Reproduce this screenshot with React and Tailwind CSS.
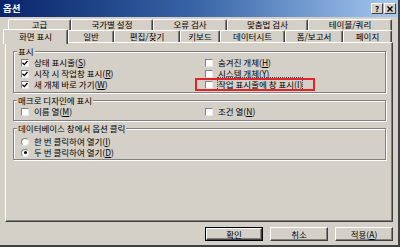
import React from "react";

const tabsBack = [
  { label: "고급", w: "w-[63px]" },
  { label: "국가별 설정", w: "w-[82px]" },
  { label: "오류 검사", w: "w-[74px]" },
  { label: "맞춤법 검사", w: "w-[81px]" },
  { label: "테이블/쿼리", w: "w-[84px]" },
];

const tabsFront = [
  { label: "일반", w: "w-[46px]" },
  { label: "편집/찾기", w: "w-[66px]" },
  { label: "키보드", w: "w-[40px]" },
  { label: "데이터시트", w: "w-[65px]" },
  { label: "폼/보고서", w: "w-[58px]" },
  { label: "페이지", w: "w-[49px]" },
];

const tabCls =
  "flex justify-center bg-[#d4d0c8] border-t border-l border-r border-t-white border-l-white border-r-[#404040] rounded-t-[2px] shadow-[inset_-1px_0_0_#808080]";

const Check = ({ checked }) => (
  <span className="w-[8px] h-[8px] shrink-0 bg-white border border-t-[#808080] border-l-[#808080] border-r-[#e8e8e8] border-b-[#e8e8e8] flex items-center justify-center">
    {checked && (
      <svg width="6" height="6" viewBox="0 0 6 6">
        <path d="M0.5 2.8 L2.3 4.6 L5.5 1" fill="none" stroke="#000" strokeWidth="1.3" />
      </svg>
    )}
  </span>
);

const Radio = ({ checked }) => (
  <span className="w-[8px] h-[8px] shrink-0 rounded-full bg-white border border-t-[#808080] border-l-[#808080] border-r-[#e8e8e8] border-b-[#e8e8e8] flex items-center justify-center">
    {checked && <span className="w-[3px] h-[3px] rounded-full bg-black" />}
  </span>
);

const Opt = ({ radio, checked, children, className = "" }) => (
  <div className={"flex items-center h-[11px] gap-[5px] " + className}>
    {radio ? <Radio checked={checked} /> : <Check checked={checked} />}
    <span className="leading-[11px] whitespace-nowrap">{children}</span>
  </div>
);

const Group = ({ title, className = "", children }) => (
  <fieldset
    className={
      "w-[373px] border border-[#808080] shadow-[inset_1px_1px_0_#fff,1px_1px_0_#fff] " +
      className
    }
  >
    <legend className="ml-[3px] px-[1px] leading-[11px] bg-[#d4d0c8] relative">{title}</legend>
    {children}
  </fieldset>
);

const Btn = ({ children, def }) => (
  <div className={"w-[58px] h-[14px] " + (def ? "border border-black" : "")}>
    <div className="w-full h-full flex items-center justify-center bg-[#d4d0c8] border-t border-l border-r border-b border-t-white border-l-white border-r-[#404040] border-b-[#404040] shadow-[inset_-1px_-1px_0_#808080] leading-none">
      {children}
    </div>
  </div>
);

export default function App() {
  return (
    <div className="w-[400px] h-[247px] overflow-hidden bg-[#d4d0c8] border-r-2 border-b-2 border-r-[#404040] border-b-[#404040] font-['Noto_Sans_CJK_KR',sans-serif] text-[8.5px] text-black flex flex-col">
      {/* title bar */}
      <div className="h-[17px] shrink-0 flex items-center justify-between bg-gradient-to-r from-[#0a246a] via-[#3a66a8] to-[#a6caf0] pl-[3px] pr-[2px]">
        <span className="text-white font-bold text-[9.5px] leading-none">옵션</span>
        <div className="flex gap-[1px]">
          <div className="w-[12px] h-[11px] bg-[#d4d0c8] border border-t-white border-l-white border-r-[#404040] border-b-[#404040] flex items-center justify-center font-bold text-[8px] leading-none">
            ?
          </div>
          <div className="w-[12px] h-[11px] bg-[#d4d0c8] border border-t-white border-l-white border-r-[#404040] border-b-[#404040] flex items-center justify-center">
            <svg width="6" height="6" viewBox="0 0 6 6">
              <path d="M0.5 0.5 L5.5 5.5 M5.5 0.5 L0.5 5.5" stroke="#000" strokeWidth="1.4" />
            </svg>
          </div>
        </div>
      </div>

      {/* tab rows */}
      <div className="mt-[2px] h-[11px] flex pl-[8px] shrink-0">
        {tabsBack.map((t) => (
          <div key={t.label} className={tabCls + " " + t.w + " h-[11px]"}>
            <span className="leading-[9px]">{t.label}</span>
          </div>
        ))}
      </div>
      <div className="h-[12px] flex items-end pl-[3px] shrink-0">
        <div className={tabCls + " w-[65px] h-[15px] -mb-[2px] relative z-10 pt-[2px]"}>
          <span className="leading-[9px]">화면 표시</span>
        </div>
        {tabsFront.map((t) => (
          <div key={t.label} className={tabCls + " " + t.w + " h-[12px] pt-[1px]"}>
            <span className="leading-[9px]">{t.label}</span>
          </div>
        ))}
      </div>

      {/* tab panel */}
      <div className="ml-[5px] w-[388px] h-[180px] shrink-0 border-t border-l border-r border-b border-t-white border-l-white border-r-[#404040] border-b-[#404040] shadow-[inset_-1px_-1px_0_#808080] pl-[7px]">
        <Group title="표시" className="mt-[3px] pb-[2px]">
          <div className="flex pl-[7px]">
            <div className="w-[184px] flex flex-col">
              <Opt checked>상태 표시줄(<u>S</u>)</Opt>
              <Opt checked>시작 시 작업창 표시(<u>R</u>)</Opt>
              <Opt checked>새 개체 바로 가기(<u>W</u>)</Opt>
            </div>
            <div className="flex flex-col">
              <Opt>숨겨진 개체(<u>H</u>)</Opt>
              <Opt>시스템 개체(<u>Y</u>)</Opt>
              <div className="relative">
                <Opt>
                  <span className="outline outline-1 outline-dotted outline-[#404040]">
                    작업 표시줄에 창 표시(<u>I</u>)
                  </span>
                </Opt>
                <span className="absolute left-[-10px] top-[-1px] w-[120px] h-[13px] border-2 border-[#e0262b]" />
              </div>
            </div>
          </div>
        </Group>

        <Group title="매크로 디자인에 표시" className="mt-[2px] pb-[3px]">
          <div className="flex pl-[7px]">
            <div className="w-[184px]">
              <Opt>이름 열(<u>M</u>)</Opt>
            </div>
            <Opt>조건 열(<u>N</u>)</Opt>
          </div>
        </Group>

        <Group title="데이터베이스 창에서 옵션 클릭" className="mt-[2px] pt-[2px] pb-[1px]">
          <div className="flex flex-col pl-[7px]">
            <Opt radio>한 번 클릭하여 열기(<u>I</u>)</Opt>
            <Opt radio checked>두 번 클릭하여 열기(<u>D</u>)</Opt>
          </div>
        </Group>
      </div>

      {/* buttons */}
      <div className="mt-[5px] flex justify-end gap-[7px] pr-[5px]">
        <Btn def>확인</Btn>
        <Btn>취소</Btn>
        <Btn>
          <span>
            적용(<u>A</u>)
          </span>
        </Btn>
      </div>
    </div>
  );
}
